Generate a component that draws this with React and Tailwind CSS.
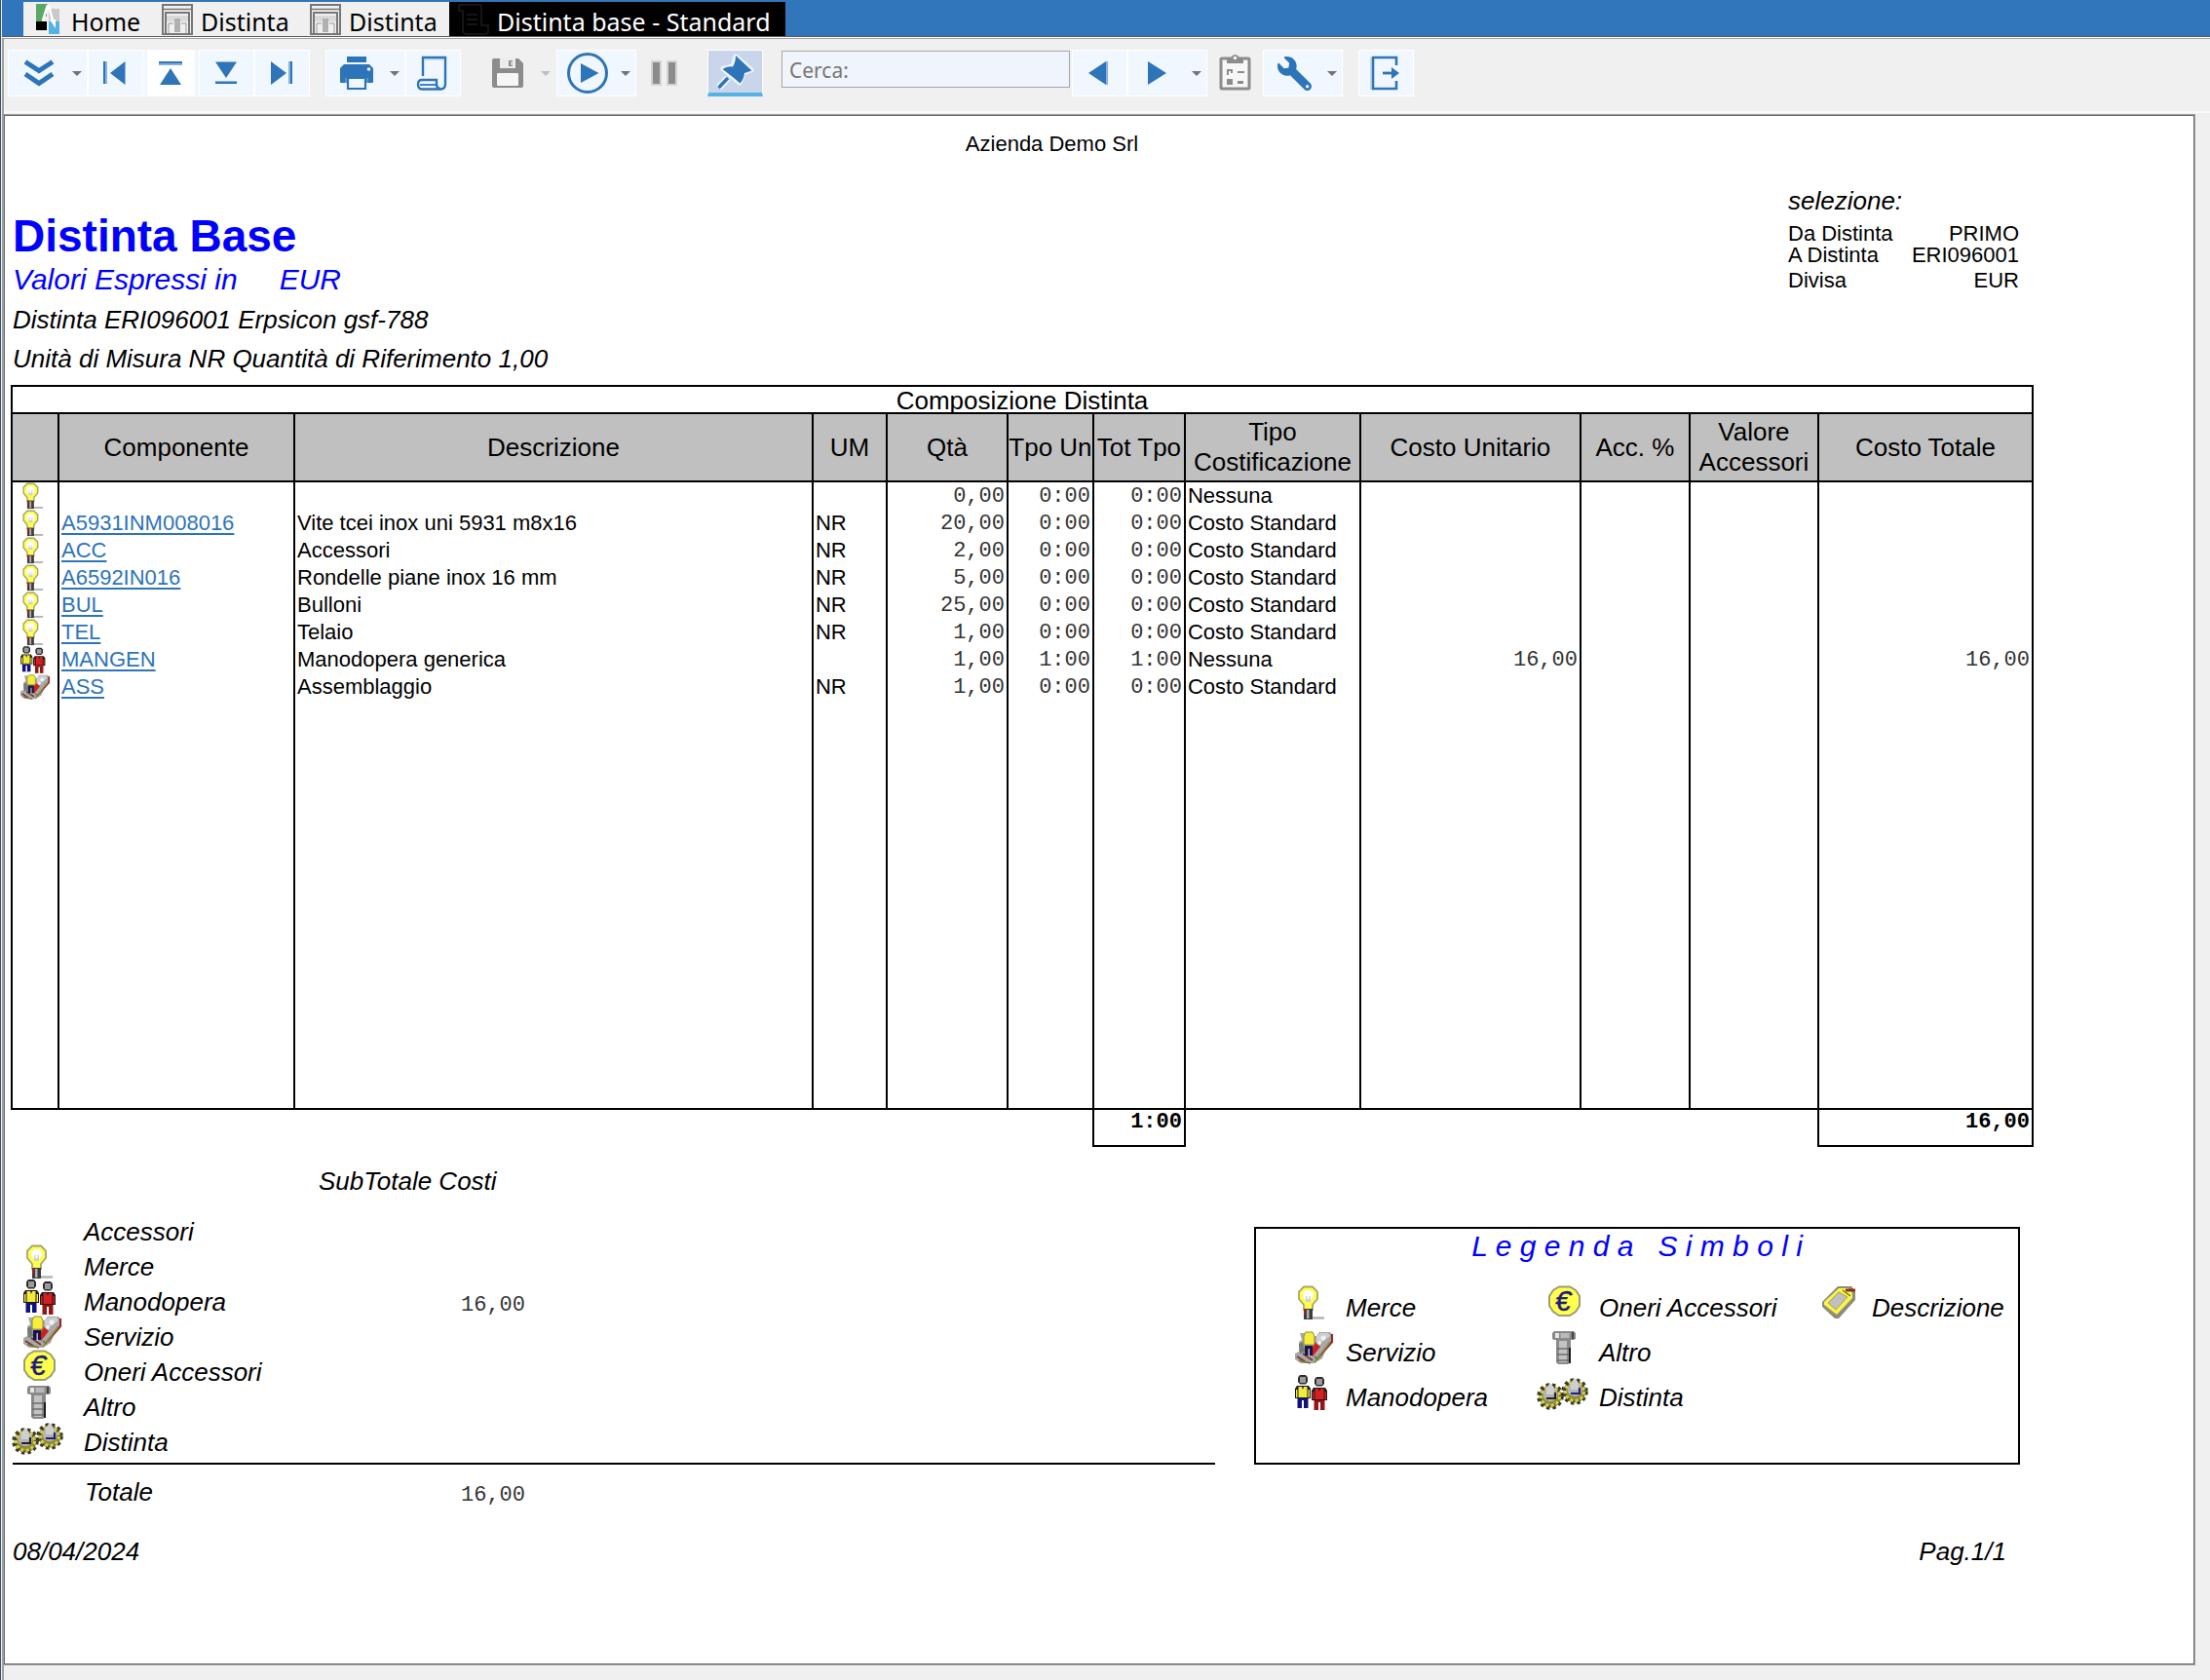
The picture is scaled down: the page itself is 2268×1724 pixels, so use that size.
import React from "react";
import { FaWrench } from "react-icons/fa";

const BLUE = "#2e74b9";
const GRAY = "#8c8c8c";

/* ---------- toolbar glyphs, all on a 46 x 46 grid ---------- */

function Glyph({ children }) {
  return (
    <svg viewBox="0 0 46 46" className="size-[46px] shrink-0" aria-hidden="true">
      {children}
    </svg>
  );
}

const ChevronsGlyph = () => (
  <Glyph>
    <g fill="none" stroke={BLUE} strokeWidth="5">
      <path d="M9 11.500 L23 20.500 L37 11.500" />
      <path d="M9 24 L23 33.500 L37 24" />
    </g>
  </Glyph>
);

const FirstGlyph = () => (
  <Glyph>
    <rect x="11" y="11" width="2" height="23" fill={BLUE} />
    <rect x="13" y="11" width="2" height="23" fill="#86b2dc" />
    <path d="M18 23 L33.500 11 V35 Z" fill={BLUE} />
  </Glyph>
);

const UpGlyph = () => (
  <Glyph>
    <rect x="11" y="11" width="24" height="2" fill={BLUE} />
    <rect x="11" y="13" width="24" height="2" fill="#86b2dc" />
    <path d="M23 18 L12 35 H34 Z" fill={BLUE} />
  </Glyph>
);

const DownGlyph = () => (
  <Glyph>
    <path d="M23 28 L12 11.500 H34 Z" fill={BLUE} />
    <rect x="12" y="31" width="22" height="1" fill="#86b2dc" />
    <rect x="12" y="32" width="22" height="2" fill={BLUE} />
  </Glyph>
);

const LastGlyph = () => (
  <Glyph>
    <path d="M28 23 L12 11 V35 Z" fill={BLUE} />
    <rect x="30" y="11" width="2" height="23" fill="#86b2dc" />
    <rect x="32" y="11" width="2" height="23" fill={BLUE} />
  </Glyph>
);

const PrinterGlyph = () => (
  <Glyph>
    <rect x="13" y="6" width="20" height="6" fill={BLUE} />
    <path d="M10 14 H36 L40 18 V32 Q40 33 39 33 H7 Q6 33 6 32 V18 Z" fill={BLUE} />
    <circle cx="35.500" cy="19" r="1.800" fill="#f0f7fe" />
    <path d="M14 28 H32 V39 H14 Z" fill="#f0f7fe" stroke={BLUE} strokeWidth="2.200" />
    <path d="M12 33 V28 M34 33 V28" stroke="#86b2dc" strokeWidth="1" />
  </Glyph>
);

const ScrollGlyph = () => (
  <Glyph>
    <g fill="none" stroke={BLUE} strokeWidth="2.400">
      <path d="M13 26 V7 H36 V34 Q36 39.500 31 39.500 H12 Q8 39.500 8 34.500 Q8 30 12 30 H27 V34 Q27 39 31 39" />
      <path d="M10 35 H26" strokeWidth="1.800" />
    </g>
    <path d="M15 8.800 H34" stroke="#a9c8e6" strokeWidth="1.500" />
  </Glyph>
);

const SaveGlyph = () => (
  <Glyph>
    <path d="M9 8 H34 L39 13 V36 Q39 38 37 38 H9 Q7 38 7 36 V10 Q7 8 9 8 Z" fill={GRAY} />
    <path d="M15 7 H31 V18 H15 Z" fill="#ececec" />
    <rect x="24" y="10" width="4" height="6" fill={GRAY} />
    <rect x="26" y="11" width="2" height="4" fill="#cfcfcf" />
    <rect x="12" y="23" width="22" height="13" rx="1" fill="#f6f6f6" />
  </Glyph>
);

const PlayGlyph = () => (
  <Glyph>
    <circle cx="23" cy="23" r="19.500" fill="none" stroke={BLUE} strokeWidth="3" />
    <path d="M16 13 L34.500 23 L16 33 Z" fill={BLUE} />
  </Glyph>
);

const PauseGlyph = () => (
  <Glyph>
    <rect x="10" y="10" width="11" height="26" fill="#d4d4d4" />
    <rect x="26" y="10" width="11" height="26" fill="#d4d4d4" />
    <rect x="12" y="12" width="7" height="22" fill={GRAY} />
    <rect x="28" y="12" width="7" height="22" fill={GRAY} />
  </Glyph>
);

const PinGlyph = () => (
  <Glyph>
    <g stroke="#eef6fb" strokeWidth="5" strokeLinejoin="round" fill="#eef6fb">
      <path d="M24 7 L40 21 L32.500 23.500 L28 34 L11 19.500 L21 17 Z" />
      <path d="M16 29 L6.500 39" strokeWidth="7" />
    </g>
    <path d="M24 6 L40.500 21.500 L33 24 Q33 29 28.500 34.500 L21.500 28.500 L10.500 20 Q15 16.500 21 17.500 Q24 13 24 6 Z" fill={BLUE} />
    <path d="M16 29 L6.500 39" stroke={BLUE} strokeWidth="3.400" />
  </Glyph>
);

const PrevGlyph = () => (
  <Glyph>
    <path d="M12 23 L30 11 V35 Z" fill={BLUE} />
    <rect x="30" y="11" width="2" height="24" fill="#86b2dc" />
  </Glyph>
);

const NextGlyph = () => (
  <Glyph>
    <path d="M12 11 L31 23 L12 35 Z" fill={BLUE} />
  </Glyph>
);

const ClipboardGlyph = () => (
  <Glyph>
    <rect x="9" y="8" width="29" height="31" rx="1" fill="#f7f7f7" stroke={GRAY} strokeWidth="3" />
    <path d="M15 9 L19 7 Q23.500 1 28 7 L32 9 V13 H15 Z" fill={GRAY} />
    <circle cx="23.500" cy="7.500" r="1.800" fill="#f7f7f7" />
    <g fill={GRAY}>
      <path d="M15 19 H21 V23 H19 V21 H17 V25 H15 Z" />
      <rect x="26" y="21" width="7" height="2" />
      <rect x="15" y="29" width="6" height="6" />
      <rect x="26" y="31" width="6" height="3" />
    </g>
  </Glyph>
);

const WrenchGlyph = () => (
  <span className="grid size-[46px] shrink-0 place-items-center">
    <FaWrench className="size-[35px] -scale-x-100 text-[#2e74b9]" />
  </span>
);

const ExitGlyph = () => (
  <Glyph>
    <path d="M34 15 V7 H10 V39 H34 V31" fill="none" stroke={BLUE} strokeWidth="2.600" />
    <path d="M8 7 V40" stroke="#a9c8e6" strokeWidth="1.500" />
    <path d="M20 23 H32" stroke={BLUE} strokeWidth="2.800" />
    <path d="M29 17 L37 23 L29 29 Z" fill={BLUE} />
  </Glyph>
);

/* ---------- tab glyphs ---------- */

const HomeLogo = () => (
  <svg viewBox="0 0 24 32" className="mr-3 h-8 w-6 shrink-0" aria-hidden="true">
    <path d="M0 0 H12 L6 18 H0 Z" fill="#5aa868" />
    <path d="M13 5 H24 V18 H13 Z" fill="#c9c9c9" />
    <path d="M6 9 H11 V13 H6 Z" fill="#5aa868" />
    <path d="M12 1 L7 17 M13 2 L19 24" stroke="#ffffff" strokeWidth="2.500" />
    <rect y="18" width="11" height="9" fill="#000000" />
    <path d="M13 18 H24 V31 H13 Z" fill="#55b2e2" />
    <path d="M14 16 L20 25 V16 Z" fill="#ffffff" />
  </svg>
);

const FormIcon = () => (
  <svg viewBox="0 0 32 32" className="mr-2 size-8 shrink-0" aria-hidden="true">
    <rect x="1" y="1" width="30" height="30" fill="#f0f0f0" stroke="#777777" strokeWidth="2" />
    <path d="M1 5.500 H31" stroke="#777777" strokeWidth="1.500" />
    <path d="M4 31 V9 H28 V31" fill="none" stroke="#777777" strokeWidth="2" />
    <path d="M5 12 H27 V18 H5 Z" fill="#d9d9d9" />
    <path d="M7 30 V20 H12 M25 30 V20 H20" fill="none" stroke="#9a9a9a" strokeWidth="1" />
    <rect x="13" y="15" width="6" height="14" fill="#b0b0b0" />
  </svg>
);

const ReportIcon = () => (
  <svg viewBox="0 0 32 32" className="mr-2 size-8 shrink-0" aria-hidden="true">
    <g fill="none" stroke="#1c1c1c" strokeWidth="1.500">
      <path d="M1 1 H24 V22 H31 V28 Q31 31 27 31 H9 Q5 31 5 27 V7 H1 Z" />
      <path d="M9 11 H20 M9 16 H20 M9 21 H20" />
    </g>
  </svg>
);

/* ---------- report symbols, all on a 39 x 36 grid ---------- */

function Symbol({ small, label, children }) {
  return (
    <svg
      viewBox="0 0 39 36"
      role="img"
      aria-label={label}
      className={small ? "block h-7 w-[30px] overflow-visible" : "block h-9 w-[39px] shrink-0 overflow-visible"}
    >
      {children}
    </svg>
  );
}

const Merce = (p) => (
  <Symbol {...p} label="Merce">
    <path d="M16 33.500 H30" stroke="#b4b4b4" strokeWidth="2.500" />
    <path d="M9 1.500 H18 L23 6.500 V14 L18 20 V25 H9 V20 L4 14 V6.500 Z" fill="#ffff4c" stroke="#a5a570" strokeWidth="1.800" />
    <path d="M11 5 H16 L19 8 V12 L16 15 H11 L8 12 V8 Z" fill="#ffffff" />
    <path d="M11 17 V11 H12.500 V14 H14.500 V11 H16 V17 Z" fill="#d0d0d8" />
    <rect x="9" y="24" width="9" height="11" fill="#3c3c3c" />
    <rect x="9" y="24" width="2" height="6" fill="#a02020" />
    <rect x="12" y="25" width="2.500" height="9" fill="#b0b0b0" />
  </Symbol>
);

function Worker({ x, y, shirt, legs }) {
  return (
    <g transform={`translate(${x} ${y})`}>
      <path d="M5 0 H11 L13 2.500 V7 L11 9.500 H5 L3 7 V2.500 Z" fill="#2c2c2c" />
      <rect x="5" y="2" width="6" height="6" fill="#9b9b9b" />
      <path d="M2 11 H14 L16 14 V24 H0 V14 Z" fill="#1a1a1a" />
      <path d="M3.500 12 H12.500 V23 H3.500 Z" fill={shirt} />
      <path d="M1 15 H2.500 V23 H1 Z M13.500 15 H15 V23 H13.500 Z" fill={shirt} />
      <path d="M7 12 L8 15 L9 12 Z" fill="#1a1a1a" />
      <rect x="2.500" y="24" width="11" height="10" fill={legs} />
      <rect x="7" y="26" width="2" height="8" fill="#ffffff" />
    </g>
  );
}

const Manodopera = (p) => (
  <Symbol {...p} label="Manodopera">
    <Worker x={0} y={0} shirt="#f2ea3e" legs="#10107e" />
    <Worker x={17} y={2} shirt="#d42020" legs="#961616" />
  </Symbol>
);

const Servizio = (p) => (
  <Symbol {...p} label="Servizio">
    <path d="M5 3 H10 L12 6 H22 L25 2 H36 L39 5 V12 L32 19 L28 29 L20 34 H6 L0 30 V24 L4 22 V12 L7 10 Z" fill="#a9a9a9" />
    <path d="M4 14 L8 12 L10 22 L5 24 Z" fill="#777777" />
    <path d="M22 6 L26 3 H34 L36 6 L28 12 H22 Z" fill="#cfcfcf" />
    <circle cx="29" cy="8" r="2.500" fill="#f2f2f2" />
    <circle cx="25" cy="13" r="2" fill="#f2f2f2" />
    <path d="M38 4 V12 L24 28" fill="none" stroke="#8c2f2f" strokeWidth="2.200" />
    <path d="M36 12 L20 33" fill="none" stroke="#8f8b3a" strokeWidth="1.800" />
    <path d="M20 12 L26 17 L18 27 L16 24 Z" fill="#cc2020" />
    <path d="M2 27 L10 32 M8 24 L18 31" stroke="#7a3a3a" strokeWidth="2" />
    <path d="M4 31 L16 34 M20 27 L24 30" stroke="#77772f" strokeWidth="1.800" />
    <path d="M11 2 H18 L20 6 V15 H9 V6 Z" fill="#f7ee3c" stroke="#8d8a3a" strokeWidth="1" />
    <path d="M10 16 H18 V26 H10 Z" fill="#15154b" />
    <path d="M13.500 19 H15 V27 H13.500 Z" fill="#b9b9b9" />
  </Symbol>
);

const Oneri = (p) => (
  <Symbol {...p} label="Oneri Accessori">
    <path d="M11 1.500 H22 L28 5 L32 11 V21 L28 27 L22 31 H11 L5 27 L1 21 V11 L5 5 Z" fill="#ffff4c" stroke="#9c9c78" strokeWidth="2" />
    <text x="15" y="26" fontSize="29" textAnchor="middle" fill="#1c1c78" stroke="#1c1c78" strokeWidth="0.500" fontFamily="Liberation Sans, sans-serif">€</text>
  </Symbol>
);

const Altro = (p) => (
  <Symbol {...p} label="Altro">
    <path d="M6 1 H26 L28 3 V9 L26 10 H6 L4 9 V3 Z" fill="#8a8a8a" />
    <rect x="7" y="3" width="4" height="5" fill="#e6e6e6" />
    <rect x="12.500" y="3" width="9" height="5" fill="#b9b9b9" />
    <rect x="24" y="2" width="2" height="7" fill="#444444" />
    <path d="M8 10 H23 V33 L20 35 H10 L8 33 Z" fill="#8a8a8a" />
    <rect x="11" y="11" width="8" height="22" fill="#c3c3c3" />
    <path d="M9 19 H21 M9 25 H21 M9 31 H21" stroke="#6e6e6e" strokeWidth="1.500" />
    <rect x="21" y="18" width="2" height="16" fill="#1c1c1c" />
  </Symbol>
);

function Gear({ x, y, core }) {
  return (
    <g transform={`translate(${x} ${y})`}>
      <circle r="11.500" fill="#8f8c3c" />
      <circle r="11.500" fill="none" stroke="#3a3a24" strokeWidth="4.500" strokeDasharray="3.200 3" />
      <circle r="9.500" fill="none" stroke="#d8d048" strokeWidth="3" strokeDasharray="3 2.500" />
      <ellipse cy="-2" rx="7.500" ry="7" fill="#b4b4b4" />
      <path d="M0 -14 L4 -9 V-2 H-4 V-9 Z" fill="#cfcfcf" />
      <path d="M-4 2 H5 V-4" fill="none" stroke={core} strokeWidth="2.200" />
    </g>
  );
}

const Distinta = (p) => (
  <Symbol {...p} label="Distinta">
    <Gear x={2} y={22} core="#222222" />
    <Gear x={27} y={17} core="#20207c" />
  </Symbol>
);

const Descrizione = (p) => (
  <Symbol {...p} label="Descrizione">
    <path d="M17 1 H31 L35 6 V15 L18 34 H14 L1 22 V17 Z" fill="#8c8c7c" />
    <path d="M18 3 H28 L32 8 V13 L16 30 L3 20 V17 Z" fill="#fbf44a" />
    <path d="M18 7 L27 12 L15 25 L7 18 Z" fill="#c0c0c0" stroke="#a9a53c" strokeWidth="1" />
    <path d="M25 5 H35" stroke="#8c2a1c" strokeWidth="2.800" />
    <path d="M22 5 L30 11" stroke="#77742c" strokeWidth="1.500" />
    <path d="M6 23 L13 29" stroke="#a9a53c" strokeWidth="1.300" strokeDasharray="2 1.500" />
  </Symbol>
);

/* ---------- window chrome ---------- */

function Caret({ dim }) {
  return (
    <svg viewBox="0 0 10 5" className={dim ? "ml-[11px] h-[5px] w-2.5 shrink-0 text-[#c0c0c0]" : "ml-[11px] h-[5px] w-2.5 shrink-0 text-[#747474]"} aria-hidden="true">
      <path d="M0 0 H10 L5 5 Z" fill="currentColor" />
    </svg>
  );
}

function ToolButton({ label, caret, flat, dim, children }) {
  const size = caret ? "w-[82px] pl-2" : "w-[57px] pl-1";
  const look = flat ? "border-transparent" : "border-white bg-[#f0f7fe]";
  return (
    <button type="button" aria-label={label} title={label} className={`flex h-12 shrink-0 items-center border ${size} ${look}`}>
      {children}
      {caret && <Caret dim={dim} />}
    </button>
  );
}

function Tabs() {
  return (
    <nav className="flex h-[37px] bg-[#3175ba] pt-0.5 pl-[22px] font-['Noto_Sans',sans-serif] text-[25px] leading-[34px] text-black">
      <button type="button" className="flex w-[131px] items-center bg-[#f0f0f0] pl-[13px] whitespace-nowrap">
        <HomeLogo />
        <span className="pt-1">Home</span>
      </button>
      <button type="button" className="flex w-[152px] items-center bg-[#f0f0f0] pl-[11px] whitespace-nowrap">
        <FormIcon />
        <span className="pt-1">Distinta</span>
      </button>
      <button type="button" className="flex w-[154px] items-center bg-[#f0f0f0] pl-[11px] whitespace-nowrap">
        <FormIcon />
        <span className="pt-1">Distinta</span>
      </button>
      <button type="button" className="flex w-[345px] items-center bg-black pl-[9px] whitespace-nowrap text-white">
        <ReportIcon />
        <span className="pt-1">Distinta base - Standard</span>
      </button>
    </nav>
  );
}

function Toolbar() {
  return (
    <div role="toolbar" className="mb-px flex border-b-2 border-[#f9f9f9] pt-[11px] pb-[15px] pl-1">
      <ToolButton label="Espandi" caret><ChevronsGlyph /></ToolButton>
      <ToolButton label="Prima pagina"><FirstGlyph /></ToolButton>
      <button type="button" aria-label="Pagina precedente" title="Pagina precedente" className="flex h-12 w-[57px] shrink-0 items-center border-x-4 border-[#f0f7fe] bg-white pl-px">
        <UpGlyph />
      </button>
      <ToolButton label="Pagina successiva"><DownGlyph /></ToolButton>
      <ToolButton label="Ultima pagina"><LastGlyph /></ToolButton>
      <div className="w-4 shrink-0" />
      <ToolButton label="Stampa" caret><PrinterGlyph /></ToolButton>
      <ToolButton label="Formato pagina"><ScrollGlyph /></ToolButton>
      <div className="w-4 shrink-0" />
      <ToolButton label="Salva" caret flat dim><SaveGlyph /></ToolButton>
      <ToolButton label="Esegui" caret><PlayGlyph /></ToolButton>
      <ToolButton label="Pausa" flat><PauseGlyph /></ToolButton>
      <div className="w-4 shrink-0" />
      <button type="button" aria-label="Blocca" title="Blocca" aria-pressed="true" className="flex h-12 w-[57px] shrink-0 items-center border border-b-4 border-white border-b-[#55b2e2] bg-[#c9d5eb] pl-1">
        <PinGlyph />
      </button>
      <input
        type="text"
        aria-label="Cerca"
        placeholder="Cerca:"
        className="mt-px mr-0.5 ml-[19px] h-[38px] w-[296px] shrink-0 border border-[#a6a6a6] bg-[#f0f5fd] px-[7px] pt-0.5 font-['Noto_Sans',sans-serif] text-[21px] text-black placeholder:text-[#767676]"
      />
      <ToolButton label="Trova precedente"><PrevGlyph /></ToolButton>
      <ToolButton label="Trova successivo" caret><NextGlyph /></ToolButton>
      <ToolButton label="Elenco" flat><ClipboardGlyph /></ToolButton>
      <ToolButton label="Strumenti" caret><WrenchGlyph /></ToolButton>
      <div className="w-4 shrink-0" />
      <ToolButton label="Esci"><ExitGlyph /></ToolButton>
    </div>
  );
}

/* ---------- report ---------- */

const rows = [
  { Icon: Merce, code: "", name: "", um: "", qty: "0,00", unit: "0:00", total: "0:00", type: "Nessuna" },
  { Icon: Merce, code: "A5931INM008016", name: "Vite tcei inox uni 5931 m8x16", um: "NR", qty: "20,00", unit: "0:00", total: "0:00", type: "Costo Standard" },
  { Icon: Merce, code: "ACC", name: "Accessori", um: "NR", qty: "2,00", unit: "0:00", total: "0:00", type: "Costo Standard" },
  { Icon: Merce, code: "A6592IN016", name: "Rondelle piane inox 16 mm", um: "NR", qty: "5,00", unit: "0:00", total: "0:00", type: "Costo Standard" },
  { Icon: Merce, code: "BUL", name: "Bulloni", um: "NR", qty: "25,00", unit: "0:00", total: "0:00", type: "Costo Standard" },
  { Icon: Merce, code: "TEL", name: "Telaio", um: "NR", qty: "1,00", unit: "0:00", total: "0:00", type: "Costo Standard" },
  { Icon: Manodopera, code: "MANGEN", name: "Manodopera generica", um: "", qty: "1,00", unit: "1:00", total: "1:00", type: "Nessuna", cost: "16,00", sum: "16,00" },
  { Icon: Servizio, code: "ASS", name: "Assemblaggio", um: "NR", qty: "1,00", unit: "0:00", total: "0:00", type: "Costo Standard" },
];

const headings = ["", "Componente", "Descrizione", "UM", "Qtà", "Tpo Un", "Tot Tpo", "Tipo Costificazione", "Costo Unitario", "Acc. %", "Valore Accessori", "Costo Totale"];

const cell = "h-7 border-x-2 border-black px-0.5 py-0 leading-7 whitespace-nowrap align-top";
const num = "h-7 border-x-2 border-black px-0.5 pt-0.5 pb-0 text-right align-top font-['Liberation_Mono',monospace] leading-[26px] whitespace-nowrap text-[#333333]";

function PartsTable() {
  return (
    <table className="w-full table-fixed border-collapse text-[22px]">
      <colgroup>
        <col className="w-12" />
        <col className="w-[242px]" />
        <col />
        <col className="w-[76px]" />
        <col className="w-[124px]" />
        <col className="w-[88px]" />
        <col className="w-[94px]" />
        <col className="w-[180px]" />
        <col className="w-[226px]" />
        <col className="w-[112px]" />
        <col className="w-[132px]" />
        <col className="w-[220px]" />
      </colgroup>
      <thead className="text-[26px]">
        <tr>
          <th colSpan={12} className="border-2 border-black px-0 pt-0.5 pb-0 text-center leading-6 font-normal">Composizione Distinta</th>
        </tr>
        <tr>
          {headings.map((h, i) => (
            <th key={i} className={`h-[70px] border-2 border-black bg-[#c0c0c0] p-0 text-center leading-[31px] font-normal ${i === 5 || i === 6 ? "whitespace-nowrap" : ""}`}>{h}</th>
          ))}
        </tr>
      </thead>
      <tbody>
        {rows.map(({ Icon, ...r }, i) => (
          <tr key={i}>
            <td className="h-7 border-x-2 border-black py-0 pr-0 pl-2 align-top"><Icon small /></td>
            <td className={cell}>
              {r.code && <a href={`#${r.code}`} className="text-[#2e74b9] underline decoration-2 underline-offset-3">{r.code}</a>}
            </td>
            <td className={cell}>{r.name}</td>
            <td className={cell}>{r.um}</td>
            <td className={num}>{r.qty}</td>
            <td className={num}>{r.unit}</td>
            <td className={num}>{r.total}</td>
            <td className={cell}>{r.type}</td>
            <td className={num}>{r.cost}</td>
            <td className={num} />
            <td className={num} />
            <td className={num}>{r.sum}</td>
          </tr>
        ))}
        <tr>
          {headings.map((_, i) => (
            <td key={i} className="h-[419px] border-x-2 border-b-2 border-black p-0" />
          ))}
        </tr>
      </tbody>
      <tfoot className="font-['Liberation_Mono',monospace] leading-[26px] font-bold">
        <tr>
          <td colSpan={6} />
          <td className="h-[38px] border-2 border-black px-0.5 py-0 text-right align-top">1:00</td>
          <td colSpan={4} />
          <td className="h-[38px] border-2 border-black px-0.5 py-0 text-right align-top">16,00</td>
        </tr>
      </tfoot>
    </table>
  );
}

const costs = [
  ["Accessori", ""],
  ["Merce", ""],
  ["Manodopera", "16,00"],
  ["Servizio", ""],
  ["Oneri Accessori", ""],
  ["Altro", ""],
  ["Distinta", ""],
];

const Amount = ({ children }) => (
  <span className="font-['Liberation_Mono',monospace] text-[22px] text-[#333333] not-italic">{children}</span>
);

const legend = [
  [Merce, "Merce"],
  [Oneri, "Oneri Accessori"],
  [Descrizione, "Descrizione"],
  [Servizio, "Servizio"],
  [Altro, "Altro"],
  null,
  [Manodopera, "Manodopera"],
  [Distinta, "Distinta"],
];

function Summary() {
  return (
    <div className="mr-3.5 ml-0.5 flex gap-10 text-[26px] italic">
      <section className="grow border-b-2 border-black pt-5 pb-[3px]">
        <h3 className="ml-[314px] leading-[30px]">SubTotale Costi</h3>
        <div className="mt-[19px] flex">
          <div className="w-[73px] pt-[31px] pl-[11px]">
            <Merce />
            <Manodopera />
            <Servizio />
            <Oneri />
            <Altro />
            <Distinta />
          </div>
          <dl className="w-[453px]">
            {costs.map(([label, value]) => (
              <div key={label} className="flex h-9 items-baseline justify-between leading-9">
                <dt>{label}</dt>
                <dd><Amount>{value}</Amount></dd>
              </div>
            ))}
          </dl>
        </div>
      </section>
      <section className="mt-[82px] w-[786px] shrink-0 border-2 border-black pl-10">
        <h3 className="pr-10 text-center text-[30px] leading-9 whitespace-pre text-[#0000ff]">L e g e n d a   S i m b o l i</h3>
        <div className="mt-[22px] grid grid-cols-[260px_280px_auto]">
          {legend.map((item, i) => {
            if (!item) return <div key={i} />;
            const [Icon, label] = item;
            return (
              <div key={i} className="flex h-[46px] items-start leading-[46px] whitespace-nowrap">
                <span className="w-[52px]"><Icon /></span>
                <span>{label}</span>
              </div>
            );
          })}
        </div>
      </section>
    </div>
  );
}

function Report() {
  return (
    <main className="pt-[15px] pr-[164px] pb-[100px] pl-1.5 text-[22px] leading-7">
      <p className="-mr-[61px] text-center">Azienda Demo Srl</p>
      <header className="flex justify-between pl-0.5">
        <div className="pt-[53px] pb-[7px] text-[26px] leading-10 italic">
          <h1 className="text-[46px] leading-[54px] font-bold text-[#0000ff] not-italic">Distinta Base</h1>
          <h2 className="mb-[3px] flex gap-[43px] text-[30px] leading-9 text-[#0000ff]">
            <span>Valori Espressi in</span>
            <span>EUR</span>
          </h2>
          <p>Distinta ERI096001 Erpsicon gsf-788</p>
          <p>Unità di Misura NR Quantità di Riferimento 1,00</p>
        </div>
        <div className="mr-[15px] w-[237px] pt-[29px]">
          <h3 className="text-[26px] leading-[30px] italic">selezione:</h3>
          <dl className="mt-2 leading-[22px]">
            <div className="flex justify-between"><dt>Da Distinta</dt><dd>PRIMO</dd></div>
            <div className="flex justify-between"><dt>A Distinta</dt><dd>ERI096001</dd></div>
            <div className="mt-1 flex justify-between"><dt>Divisa</dt><dd>EUR</dd></div>
          </dl>
        </div>
      </header>
      <PartsTable />
      <Summary />
      <div className="mt-[13px] flex w-[528px] items-baseline justify-between pl-[76px] text-[26px] leading-[30px] italic">
        <span>Totale</span>
        <Amount>16,00</Amount>
      </div>
      <footer className="mt-[27px] mr-7 ml-0.5 flex justify-between text-[26px] leading-[30px] italic">
        <span>08/04/2024</span>
        <span>Pag.1/1</span>
      </footer>
    </main>
  );
}

export default function App() {
  return (
    <div className="flex min-h-screen flex-col border-l border-[#35536f] bg-[#f0f0f0] pl-px font-['Liberation_Sans',Arial,sans-serif] text-black">
      <Tabs />
      <div className="h-0.5 border-t border-[#5a5a5a] bg-white" />
      <div className="flex grow flex-col border-t border-l-2 border-[#a0a0a0]">
        <Toolbar />
        <div className="mr-[15px] mb-[15px] grow border-t border-r border-b border-[#a0a0a0]">
          <div className="h-full border border-[#696969] bg-white">
            <Report />
          </div>
        </div>
      </div>
    </div>
  );
}
